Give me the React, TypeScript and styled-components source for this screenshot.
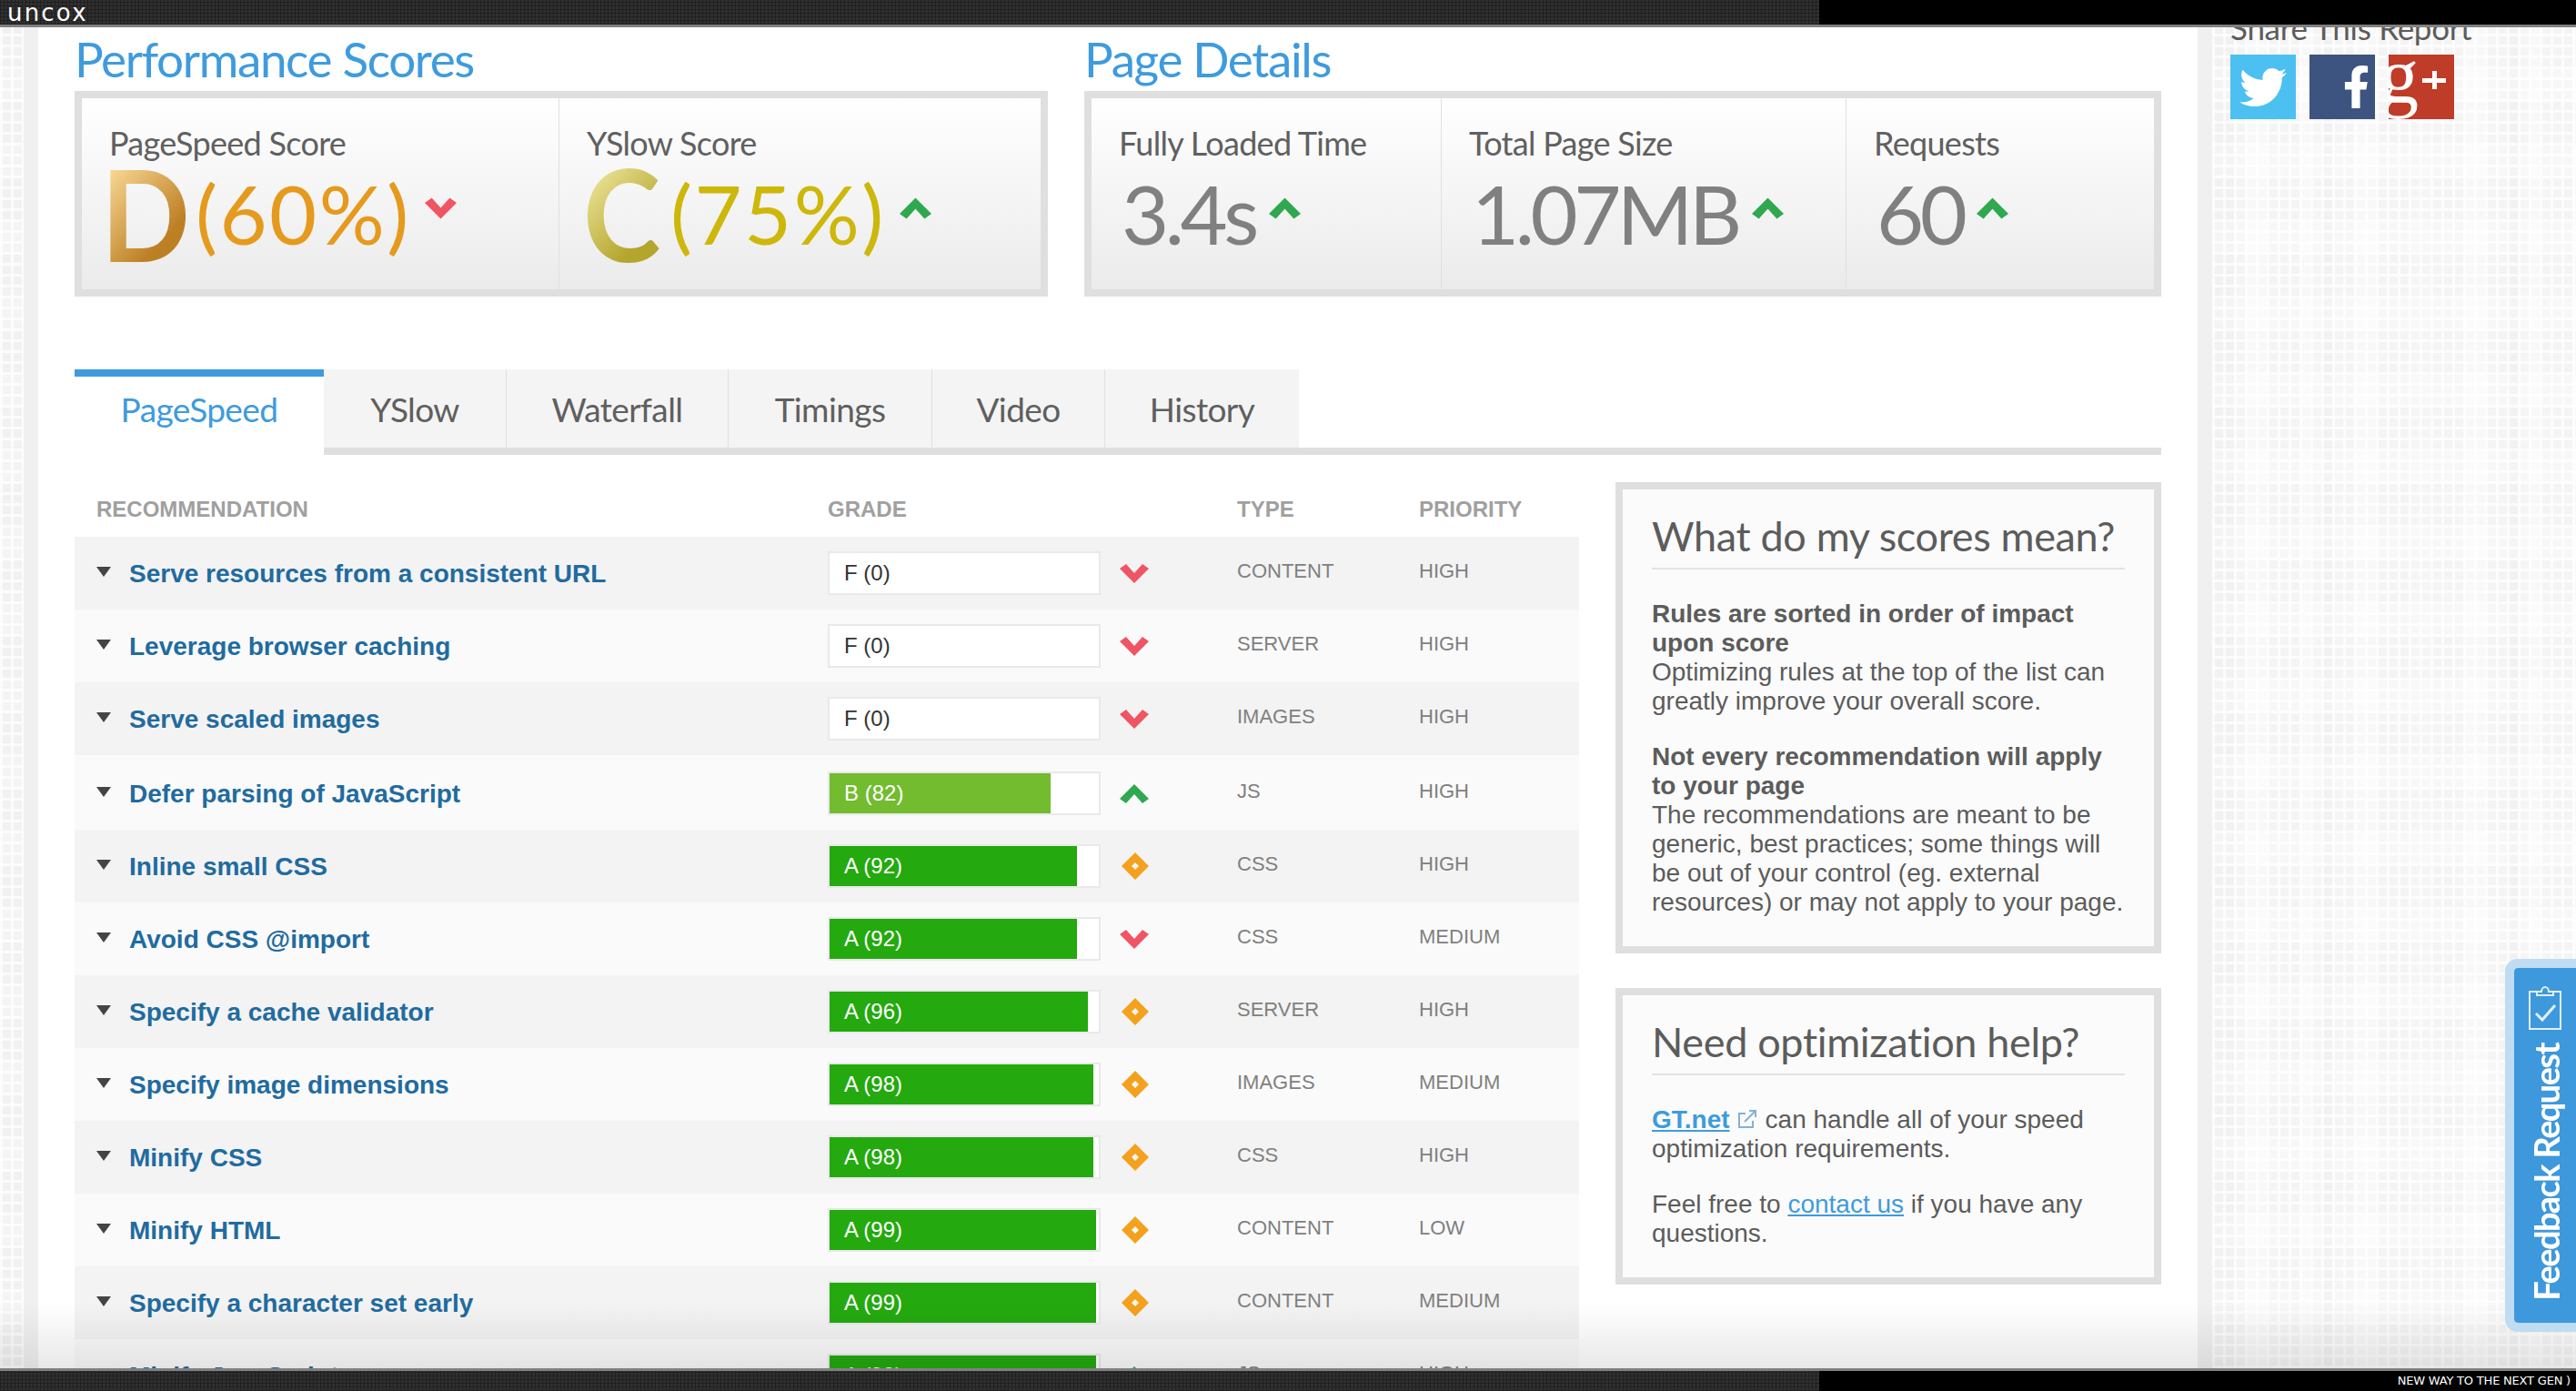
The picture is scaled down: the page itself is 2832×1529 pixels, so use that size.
import React from "react";
import styled, { createGlobalStyle } from "styled-components";
import { FaTwitter, FaFacebookF } from "react-icons/fa";

const GlobalStyle = createGlobalStyle`
  html, body {
    margin: 0;
    height: 100%;
    overflow: hidden;
    background: #fff;
    font-family: "Liberation Sans", Arial, sans-serif;
  }
`;

const DISPLAY = `Lato, "Open Sans", sans-serif`;

const paleTexture = `
  repeating-linear-gradient(90deg, rgba(255,255,255,.75) 0 3px, transparent 3px 12px),
  repeating-linear-gradient(0deg, rgba(255,255,255,.75) 0 3px, transparent 3px 12px),
  repeating-linear-gradient(90deg, rgba(0,0,0,.014) 0 36px, transparent 36px 60px),
  repeating-linear-gradient(0deg, rgba(0,0,0,.012) 0 48px, transparent 48px 84px),
  repeating-linear-gradient(90deg, rgba(0,0,0,.01) 0 24px, transparent 24px 108px)
`;

const darkTexture = `
  repeating-linear-gradient(90deg, #202020 0 1px, transparent 1px 4px),
  repeating-linear-gradient(0deg, #202020 0 1px, transparent 1px 4px)
`;

const Page = styled.div`
  position: relative;
  height: 100vh;
  display: flex;
  flex-direction: column;
  overflow: hidden;
`;

const BarStrip = styled.div`
  flex: none;
  display: flex;
  background: #000;
`;

const TopStrip = styled(BarStrip)`
  height: 30px;
  box-sizing: border-box;
  border-bottom: 3px solid #808080;
`;

const BottomStrip = styled(BarStrip)`
  height: 25px;
  box-sizing: border-box;
  border-top: 3px solid #808080;
  justify-content: space-between;
`;

const DarkPanel = styled.div`
  width: 2000px;
  height: 100%;
  background-color: #303030;
  background-image: ${darkTexture};
  display: flex;
  align-items: center;
`;

const Logo = styled.span`
  margin: 0 0 0 8px;
  color: #fff;
  font: 26px/24px "DejaVu Sans", sans-serif;
  letter-spacing: 2.2px;
`;

const Tagline = styled.span`
  margin: 0 6px 0 0;
  color: #fff;
  font: 13px/22px "DejaVu Sans", sans-serif;
  text-transform: uppercase;
  letter-spacing: -0.2px;
  white-space: nowrap;
`;

const Middle = styled.div`
  flex: 1;
  min-height: 0;
  display: flex;
  overflow: hidden;
`;

const LeftGutter = styled.div`
  flex: none;
  width: 26px;
  background-color: #fbfbfb;
  background-image: ${paleTexture};
  border-right: 16px solid #f0f0f0;
`;

const Main = styled.main`
  flex: none;
  width: 2334px;
  padding-left: 40px;
  background: #fff;
`;

const SideGutter = styled.aside`
  flex: 1;
  border-left: 16px solid #f0f0f0;
  background-color: #fbfbfb;
  background-image: ${paleTexture};
  padding-left: 20px;
`;

const ShareTitle = styled.h3`
  margin: -22px 0 0;
  color: #5c5c5c;
  font: 400 35px/44px ${DISPLAY};
  letter-spacing: -0.3px;
  white-space: nowrap;
`;

const ShareRow = styled.div`
  display: flex;
  gap: 15px;
  margin-top: 8px;
`;

const ShareButton = styled.div<{ $bg: string }>`
  width: 72px;
  height: 71px;
  background: ${(p) => p.$bg};
  color: #fff;
  display: flex;
  overflow: hidden;
`;

const TwitterButton = styled(ShareButton)`
  align-items: center;
  justify-content: center;
  font-size: 52px;
`;

const FacebookButton = styled(ShareButton)`
  align-items: flex-end;
  justify-content: flex-end;
  font-size: 47px;
  svg {
    margin: 0 -3px 12px 0;
  }
`;

const SummaryRow = styled.div`
  display: flex;
  gap: 40px;
`;

const SummaryColumn = styled.section<{ $width: number }>`
  width: ${(p) => p.$width}px;
`;

const SectionTitle = styled.h2`
  margin: 0;
  height: 70px;
  color: #3e9bdd;
  font: 400 53px/70px ${DISPLAY};
  letter-spacing: -1.35px;
  white-space: nowrap;
`;

const ScoreBox = styled.div`
  height: 226px;
  box-sizing: border-box;
  border: 8px solid #dfdfdf;
  display: flex;
  background: linear-gradient(#fff, #ebebeb);
`;

const ScoreCard = styled.div<{ $width?: number }>`
  flex: ${(p) => (p.$width ? `none` : 1)};
  width: ${(p) => (p.$width ? `${p.$width}px` : `auto`)};
  box-sizing: border-box;
  padding: 27px 0 0 30px;
  border-right: 1px solid #e0e0e0;
  &:last-child {
    border-right: 0;
  }
`;

const ScoreLabel = styled.div`
  color: #606060;
  font: 400 36px/44px ${DISPLAY};
  letter-spacing: -0.7px;
  white-space: nowrap;
`;

const ScoreValue = styled.div`
  height: 110px;
  display: flex;
  align-items: center;
  svg {
    margin-top: -10px;
  }
`;

const LetterGrade = styled.span<{ $from: string; $to: string; $width: number; $left: number }>`
  flex: none;
  display: inline-block;
  width: ${(p) => p.$width}px;
  margin-left: ${(p) => p.$left}px;
  font: 700 140px/110px ${DISPLAY};
  background: linear-gradient(135deg, ${(p) => p.$from}, ${(p) => p.$to} 75%);
  -webkit-background-clip: text;
  background-clip: text;
  color: transparent;
  transform: scaleX(0.92);
  transform-origin: left center;
`;

const Percent = styled.span<{ $color: string }>`
  margin-right: 15px;
  color: ${(p) => p.$color};
  font: 400 90px/110px ${DISPLAY};
  letter-spacing: 2.4px;
  white-space: nowrap;
`;

const Measure = styled(Percent)`
  margin-left: 3px;
  letter-spacing: -4.5px;
`;

const ChevronUp = styled.svg`
  flex: none;
  fill: #2fa84f;
`;

const ChevronDown = styled(ChevronUp)`
  fill: #ef5565;
`;

const TabBar = styled.nav`
  display: flex;
  height: 94px;
  margin: 80px 0 0;
  width: 2294px;
  box-sizing: border-box;
  border-bottom: 8px solid #dfdfdf;
  align-items: stretch;
`;

const Tab = styled.div<{ $width: number; $active?: boolean }>`
  flex: none;
  width: ${(p) => p.$width}px;
  height: ${(p) => (p.$active ? 94 : 86)}px;
  box-sizing: border-box;
  background: ${(p) => (p.$active ? "#fff" : "#f4f4f4")};
  border-top: ${(p) => (p.$active ? "8px solid #3e9bdd" : "0")};
  border-right: ${(p) => (p.$active ? "0" : "1px solid #e0e0e0")};
  color: ${(p) => (p.$active ? "#3e9bdd" : "#5f5f5f")};
  font: 400 37px/${(p) => (p.$active ? 72 : 88)}px ${DISPLAY};
  letter-spacing: -0.6px;
  text-align: center;
  &:last-child {
    border-right: 0;
  }
`;

const Body = styled.div`
  display: flex;
  gap: 40px;
  width: 2294px;
`;

const TableWrap = styled.div`
  flex: none;
  width: 1654px;
`;

const HeadRow = styled.div`
  display: flex;
  align-items: center;
  height: 90px;
  box-sizing: border-box;
  padding-top: 30px;
  color: #a0a0a0;
  font: 700 24px/28px "Liberation Sans", Arial, sans-serif;
`;

const Row = styled.div<{ $tall?: boolean }>`
  display: flex;
  align-items: center;
  height: ${(p) => (p.$tall ? 82 : 80)}px;
  box-sizing: border-box;
  padding-top: ${(p) => (p.$tall ? 2 : 0)}px;
  &:nth-child(even) {
    background: #f3f3f3;
  }
  &:nth-child(odd) {
    background: #fafafa;
  }
`;

const NameCell = styled.div`
  flex: none;
  width: 828px;
  box-sizing: border-box;
  padding-left: 24px;
  display: flex;
  align-items: center;
`;

const Caret = styled.i`
  flex: none;
  width: 0;
  height: 0;
  margin: -3px 20px 0 0;
  border-left: 8px solid transparent;
  border-right: 8px solid transparent;
  border-top: 11px solid #444;
`;

const RuleName = styled.a`
  padding-top: 1px;
  color: #216b9f;
  font: 700 28px/32px "Liberation Sans", Arial, sans-serif;
  white-space: nowrap;
`;

const GradeBar = styled.div`
  flex: none;
  width: 300px;
  height: 48px;
  box-sizing: border-box;
  border: 2px solid #e9e9e9;
  background: #fff;
`;

const GradeFill = styled.div<{ $color: string; $empty: boolean }>`
  height: 100%;
  box-sizing: border-box;
  padding-left: 16px;
  background: ${(p) => p.$color};
  color: ${(p) => (p.$empty ? "#333" : "#fff")};
  font: 24px/44px "Liberation Sans", Arial, sans-serif;
  white-space: nowrap;
`;

const TrendCell = styled.div`
  flex: none;
  width: 150px;
  box-sizing: border-box;
  padding-left: 21px;
  display: flex;
  align-items: center;
  height: 30px;
`;

const Diamond = styled.svg`
  fill: #f4a11e;
  margin-left: 2px;
`;

const TextCell = styled.div<{ $width: number }>`
  flex: none;
  width: ${(p) => p.$width}px;
  white-space: nowrap;
`;

const FirstHeadCell = styled(TextCell)`
  box-sizing: border-box;
  padding-left: 24px;
`;

const TypeCell = styled(TextCell)`
  color: #808080;
  font: 22px/26px "Liberation Sans", Arial, sans-serif;
  padding-bottom: 4px;
`;

const InfoColumn = styled.div`
  flex: 1;
  padding-top: 30px;
`;

const InfoBox = styled.div`
  box-sizing: border-box;
  border: 8px solid #dfdfdf;
  background: #fbfbfb;
  padding: 0 32px 32px;
  margin-bottom: 38px;
  color: #5c5c5c;
  font: 28px/32px "Liberation Sans", Arial, sans-serif;
`;

const InfoTitle = styled.h3`
  margin: 0 0 33px;
  padding: 28px 0 0;
  height: 58px;
  border-bottom: 2px solid #e3e3e3;
  color: #5c5c5c;
  font: 400 45px/46px ${DISPLAY};
  letter-spacing: -0.35px;
  white-space: nowrap;
`;

const InfoText = styled.p`
  margin: 0 0 29px;
  &:last-child {
    margin-bottom: 0;
  }
  strong {
    display: block;
  }
`;

const InfoLink = styled.a<{ $bold?: boolean }>`
  color: #3e9bdd;
  font-weight: ${(p) => (p.$bold ? 700 : 400)};
  text-decoration: underline;
`;

const ExternalIcon = styled.svg`
  margin: 0 9px 0 8px;
  vertical-align: -1px;
  stroke: #82b2d8;
  fill: none;
`;

const FeedbackTab = styled.div`
  position: absolute;
  right: 0;
  top: 1054px;
  width: 78px;
  height: 410px;
  box-sizing: border-box;
  border: 10px solid #bfdcf2;
  border-right: 0;
  border-radius: 14px 0 0 14px;
  background: #3e98dc;
  background-clip: padding-box;
  color: #fff;
  display: flex;
  flex-direction: column;
  align-items: center;
  padding-top: 19px;
`;

const FeedbackText = styled.span`
  writing-mode: vertical-rl;
  transform: rotate(180deg);
  margin: 15px 0 0 2px;
  font: 700 38px/40px ${DISPLAY};
  letter-spacing: -1.6px;
  white-space: nowrap;
`;

const BottomFade = styled.div`
  position: absolute;
  left: 0;
  right: 0;
  bottom: 25px;
  height: 72px;
  background: linear-gradient(rgba(0, 0, 0, 0), rgba(0, 0, 0, 0.09));
  pointer-events: none;
`;

type Trend = "up" | "down" | "same";

const rules: {
  name: string;
  grade: string;
  score: number;
  trend: Trend;
  type: string;
  priority: string;
}[] = [
  { name: "Serve resources from a consistent URL", grade: "F", score: 0, trend: "down", type: "CONTENT", priority: "HIGH" },
  { name: "Leverage browser caching", grade: "F", score: 0, trend: "down", type: "SERVER", priority: "HIGH" },
  { name: "Serve scaled images", grade: "F", score: 0, trend: "down", type: "IMAGES", priority: "HIGH" },
  { name: "Defer parsing of JavaScript", grade: "B", score: 82, trend: "up", type: "JS", priority: "HIGH" },
  { name: "Inline small CSS", grade: "A", score: 92, trend: "same", type: "CSS", priority: "HIGH" },
  { name: "Avoid CSS @import", grade: "A", score: 92, trend: "down", type: "CSS", priority: "MEDIUM" },
  { name: "Specify a cache validator", grade: "A", score: 96, trend: "same", type: "SERVER", priority: "HIGH" },
  { name: "Specify image dimensions", grade: "A", score: 98, trend: "same", type: "IMAGES", priority: "MEDIUM" },
  { name: "Minify CSS", grade: "A", score: 98, trend: "same", type: "CSS", priority: "HIGH" },
  { name: "Minify HTML", grade: "A", score: 99, trend: "same", type: "CONTENT", priority: "LOW" },
  { name: "Specify a character set early", grade: "A", score: 99, trend: "same", type: "CONTENT", priority: "MEDIUM" },
  { name: "Minify JavaScript", grade: "A", score: 99, trend: "up", type: "JS", priority: "HIGH" },
];

const tabs = [
  { label: "PageSpeed", width: 274 },
  { label: "YSlow", width: 201 },
  { label: "Waterfall", width: 244 },
  { label: "Timings", width: 224 },
  { label: "Video", width: 190 },
  { label: "History", width: 213 },
];

const Up = ({ w = 32, h = 21 }: { w?: number; h?: number }) => (
  <ChevronUp width={w} height={h} viewBox="0 0 32 21">
    <polygon points="16,0 32,16 25,21 16,11 7,21 0,16" />
  </ChevronUp>
);

const Down = ({ w = 32, h = 21 }: { w?: number; h?: number }) => (
  <ChevronDown width={w} height={h} viewBox="0 0 32 21">
    <polygon points="16,21 32,5 25,0 16,10 7,0 0,5" />
  </ChevronDown>
);

const TrendIcon = ({ trend }: { trend: Trend }) => {
  if (trend === "up") return <Up />;
  if (trend === "down") return <Down />;
  return (
    <Diamond width="30" height="30" viewBox="0 0 30 30">
      <path fillRule="evenodd" d="M15 0 30 15 15 30 0 15ZM15 11 11 15 15 19 19 15Z" />
    </Diamond>
  );
};

const gradeColor = (grade: string) => {
  if (grade === "A") return "#24a90f";
  if (grade === "B") return "#73bb2f";
  return "#fff";
};

const GooglePlus = () => (
  <svg width="72" height="71" viewBox="0 0 72 71">
    <text x="-10" y="52" fill="#fff" fontFamily="Liberation Serif, serif" fontSize="86">
      g
    </text>
    <path fill="#fff" d="M48 18h5v8h10v5H53v7h-5v-7H37v-5h11z" />
  </svg>
);

const Clipboard = () => (
  <svg width="36" height="49" viewBox="0 0 36 49" fill="none" stroke="#fff" strokeWidth="2" opacity=".85">
    <path d="M9 7H1v41h34V7h-8" />
    <path d="M9 11V7h5c0-3 2-5 4-5s4 2 4 5h5v4z" />
    <path strokeWidth="3" d="M8 31l7 7L29 22" />
  </svg>
);

export default function App() {
  return (
    <Page>
      <GlobalStyle />
      <TopStrip>
        <DarkPanel>
          <Logo>uncox</Logo>
        </DarkPanel>
      </TopStrip>
      <Middle>
        <LeftGutter />
        <Main>
          <SummaryRow>
            <SummaryColumn $width={1070}>
              <SectionTitle>Performance Scores</SectionTitle>
              <ScoreBox>
                <ScoreCard $width={525}>
                  <ScoreLabel>PageSpeed Score</ScoreLabel>
                  <ScoreValue>
                    <LetterGrade $from="#ffe3a3" $to="#bd7f24" $width={104} $left={-9}>D</LetterGrade>
                    <Percent $color="#e59a1d">(60%)</Percent>
                    <Down w={35} h={24} />
                  </ScoreValue>
                </ScoreCard>
                <ScoreCard>
                  <ScoreLabel>YSlow Score</ScoreLabel>
                  <ScoreValue>
                    <LetterGrade $from="#f5efaa" $to="#b3a52d" $width={96} $left={-4}>C</LetterGrade>
                    <Percent $color="#cdb70a">(75%)</Percent>
                    <Up w={35} h={24} />
                  </ScoreValue>
                </ScoreCard>
              </ScoreBox>
            </SummaryColumn>
            <SummaryColumn $width={1184}>
              <SectionTitle>Page Details</SectionTitle>
              <ScoreBox>
                <ScoreCard $width={385}>
                  <ScoreLabel>Fully Loaded Time</ScoreLabel>
                  <ScoreValue>
                    <Measure $color="#808080">3.4s</Measure>
                    <Up w={35} h={24} />
                  </ScoreValue>
                </ScoreCard>
                <ScoreCard $width={445}>
                  <ScoreLabel>Total Page Size</ScoreLabel>
                  <ScoreValue>
                    <Measure $color="#808080">1.07MB</Measure>
                    <Up w={35} h={24} />
                  </ScoreValue>
                </ScoreCard>
                <ScoreCard>
                  <ScoreLabel>Requests</ScoreLabel>
                  <ScoreValue>
                    <Measure $color="#808080">60</Measure>
                    <Up w={35} h={24} />
                  </ScoreValue>
                </ScoreCard>
              </ScoreBox>
            </SummaryColumn>
          </SummaryRow>

          <TabBar>
            {tabs.map((tab, i) => (
              <Tab key={tab.label} $width={tab.width} $active={i === 0}>
                {tab.label}
              </Tab>
            ))}
          </TabBar>

          <Body>
            <TableWrap>
              <HeadRow>
                <FirstHeadCell $width={828}>RECOMMENDATION</FirstHeadCell>
                <TextCell $width={450}>GRADE</TextCell>
                <TextCell $width={200}>TYPE</TextCell>
                <TextCell $width={176}>PRIORITY</TextCell>
              </HeadRow>
              {rules.map((rule) => (
                <Row key={rule.name} $tall={rule.name.startsWith("Defer")}>
                  <NameCell>
                    <Caret />
                    <RuleName>{rule.name}</RuleName>
                  </NameCell>
                  <GradeBar>
                    <GradeFill
                      $color={gradeColor(rule.grade)}
                      $empty={rule.score === 0}
                      style={{ width: rule.score === 0 ? "100%" : `${rule.score}%` }}
                    >
                      {rule.grade} ({rule.score})
                    </GradeFill>
                  </GradeBar>
                  <TrendCell>
                    <TrendIcon trend={rule.trend} />
                  </TrendCell>
                  <TypeCell $width={200}>{rule.type}</TypeCell>
                  <TypeCell $width={176}>{rule.priority}</TypeCell>
                </Row>
              ))}
            </TableWrap>
            <InfoColumn>
              <InfoBox>
                <InfoTitle>What do my scores mean?</InfoTitle>
                <InfoText>
                  <strong>Rules are sorted in order of impact upon score</strong>
                  Optimizing rules at the top of the list can greatly improve your overall score.
                </InfoText>
                <InfoText>
                  <strong>Not every recommendation will apply to your page</strong>
                  The recommendations are meant to be generic, best practices; some things will be out of your control (eg. external resources) or may not apply to your page.
                </InfoText>
              </InfoBox>
              <InfoBox>
                <InfoTitle>Need optimization help?</InfoTitle>
                <InfoText>
                  <InfoLink $bold>GT.net</InfoLink>
                  <ExternalIcon width="22" height="22" viewBox="0 0 22 22" strokeWidth="2">
                    <path d="M9 5H2v15h15v-7" />
                    <path d="M8 14 20 2M13 2h7v7" />
                  </ExternalIcon>
                  can handle all of your speed optimization requirements.
                </InfoText>
                <InfoText>
                  Feel free to <InfoLink>contact us</InfoLink> if you have any questions.
                </InfoText>
              </InfoBox>
            </InfoColumn>
          </Body>
        </Main>
        <SideGutter>
          <ShareTitle>Share This Report</ShareTitle>
          <ShareRow>
            <TwitterButton $bg="#4cc0f1">
              <FaTwitter />
            </TwitterButton>
            <FacebookButton $bg="#3d5380">
              <FaFacebookF />
            </FacebookButton>
            <ShareButton $bg="#bf3c28">
              <GooglePlus />
            </ShareButton>
          </ShareRow>
        </SideGutter>
      </Middle>
      <BottomStrip>
        <DarkPanel />
        <Tagline>new way to the next gen )</Tagline>
      </BottomStrip>
      <BottomFade />
      <FeedbackTab>
        <Clipboard />
        <FeedbackText>Feedback Request</FeedbackText>
      </FeedbackTab>
    </Page>
  );
}
